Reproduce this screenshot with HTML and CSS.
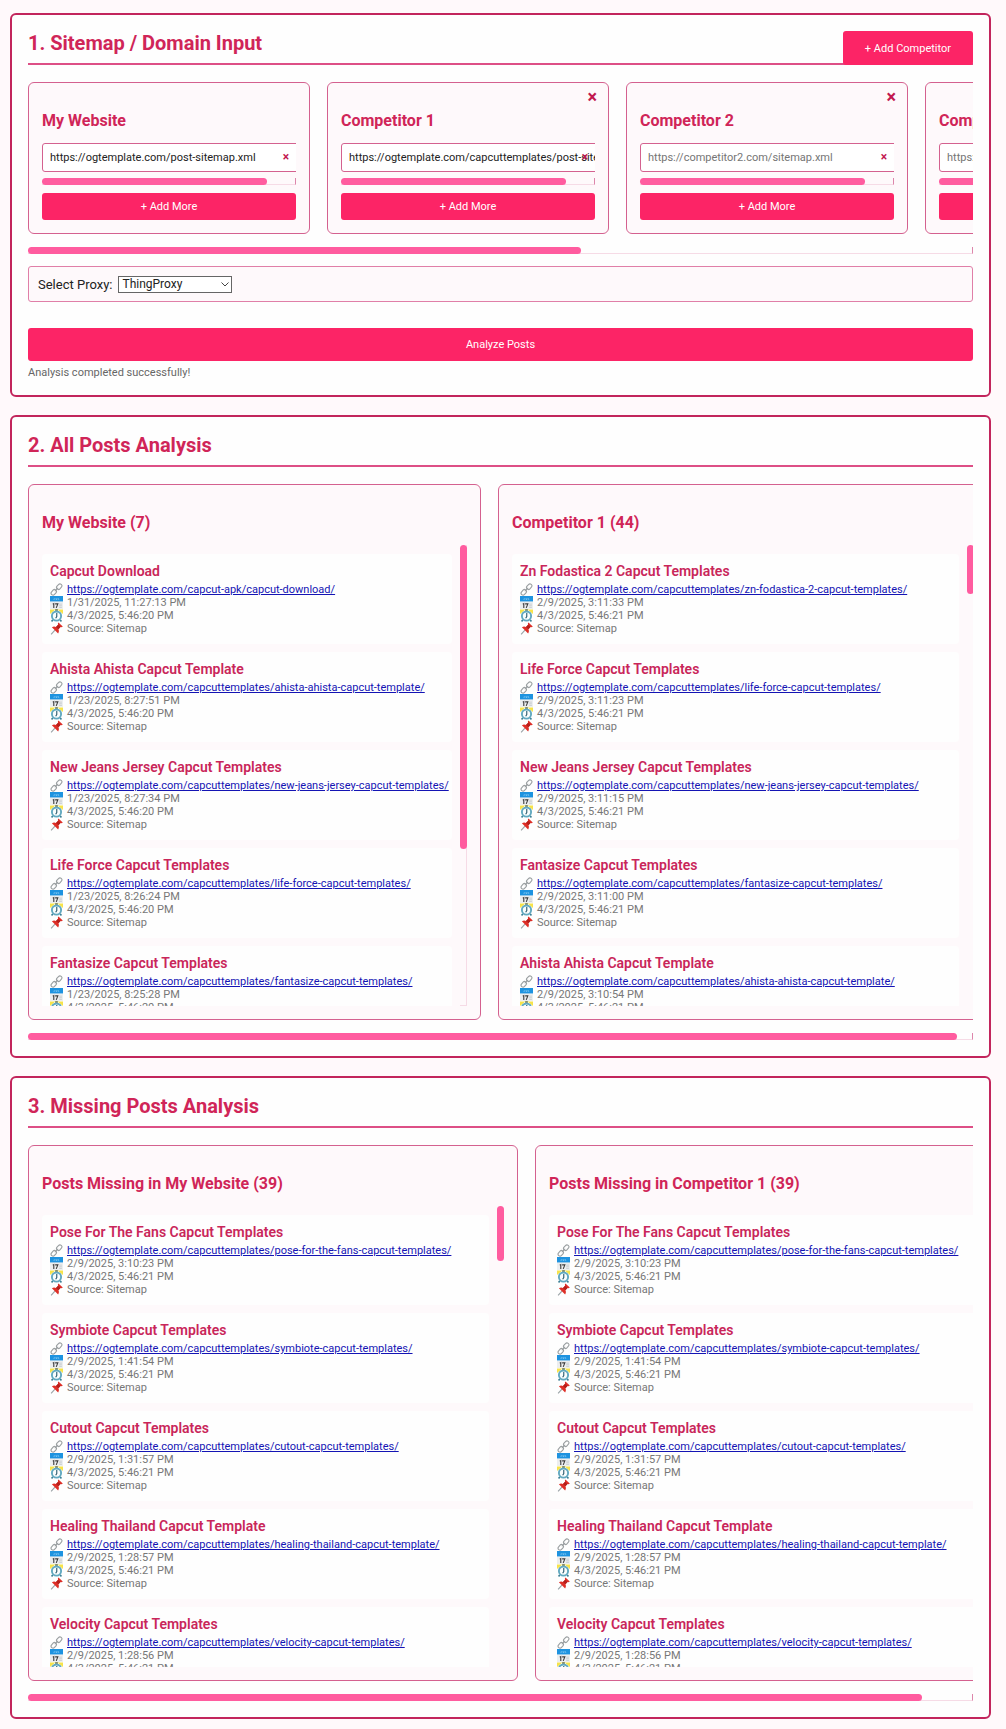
FILE: index.html
```html
<!DOCTYPE html>
<html lang="en">
<head>
<meta charset="utf-8">
<title>Sitemap Analysis</title>
<link rel="stylesheet" href="styles.css">
</head>
<body>
<svg class="sprite" aria-hidden="true">
  <symbol id="i-link" viewBox="0 0 24 24">
    <g fill="none" stroke="#9a9fa1" stroke-width="2">
      <rect x="-5.6" y="-3.6" width="11.2" height="7.2" rx="3.6" transform="translate(17 6.8) rotate(-48)"/>
      <rect x="-5.6" y="-3.6" width="11.2" height="7.2" rx="3.6" transform="translate(7 17.2) rotate(-48)"/>
      <path d="M9.500 14.500l5-5.200" stroke-linecap="round"/>
    </g>
  </symbol>
  <symbol id="i-cal" viewBox="0 0 24 24">
    <rect x="0" y="8" width="24" height="16" fill="#eceeef"/>
    <rect x="0" y="0" width="24" height="10" fill="#1e93e0"/>
    <path d="M8 4v2.400h-1.500M11 4v2.400h2V4M15.500 4v2.400h1.500" fill="none" stroke="#a6dbf7" stroke-width="1"/>
    <path d="M5 15l2-1V22M9.500 14.500h5l-3 7.500" fill="none" stroke="#3a3a3a" stroke-width="2"/>
    <path d="M17 15h5M17 18h5M17 21h5" stroke="#c3c8ca" stroke-width="1.500"/>
  </symbol>
  <symbol id="i-clock" viewBox="0 0 24 24">
    <path d="M0 9V1h10zM24 9V1h-10z" fill="#f6e34a"/>
    <path d="M5 20l-2 3M19 20l2 3" stroke="#3c7f94" stroke-width="3"/>
    <rect x="9.500" y="0" width="5" height="4" fill="#8a8f62"/>
    <circle cx="12" cy="13" r="8.500" fill="#fafdfd" stroke="#62a9c0" stroke-width="3.500"/>
    <path d="M12.500 7.500v6.500l-2 3" fill="none" stroke="#24566a" stroke-width="2"/>
  </symbol>
  <symbol id="i-pin" viewBox="0 0 24 24">
    <path d="M9.500 14.500L2 23" stroke="#9aa3a6" stroke-width="2"/>
    <path d="M3.500 9.500c3-2 5.500-1.500 7.500-.5l4-4c-.7-1.500-.4-3 .6-4.200l8 7.600c-1.200 1.200-2.600 1.500-4.200 1l-3.800 4.200c1.200 2.400 1.200 5-.6 7.400z" fill="#de2f27"/>
    <path d="M11 9l4-4 4.400 4.400-3.800 4.200z" fill="#b31f1b"/>
  </symbol>
</svg>
<main class="page">
  <section class="panel">
    <h2 class="panel-title">1. Sitemap / Domain Input</h2>
    <button class="btn add-competitor" type="button">+ Add Competitor</button>
    <div class="scroller">
      <div class="card site">
        <h3 class="card-title">My Website</h3>
        <div class="urls"><div class="url-row"><input class="url" type="text" aria-label="My Website sitemap" value="https://ogtemplate.com/post-sitemap.xml"><button class="clear" type="button" aria-label="Remove URL">×</button></div></div>
        <div class="hbar"><div class="thumb" style="width:89%"></div></div>
        <button class="btn add-more" type="button">+ Add More</button>
      </div>
      <div class="card site">
        <button class="close" type="button" aria-label="Remove Competitor 1">×</button>
        <h3 class="card-title">Competitor 1</h3>
        <div class="urls"><div class="url-row"><input class="url" type="text" aria-label="Competitor 1 sitemap" value="https://ogtemplate.com/capcuttemplates/post-sitemap.xml"><button class="clear" type="button" aria-label="Remove URL">×</button></div></div>
        <div class="hbar"><div class="thumb" style="width:89%"></div></div>
        <button class="btn add-more" type="button">+ Add More</button>
      </div>
      <div class="card site">
        <button class="close" type="button" aria-label="Remove Competitor 2">×</button>
        <h3 class="card-title">Competitor 2</h3>
        <div class="urls"><div class="url-row"><input class="url" type="text" aria-label="Competitor 2 sitemap" placeholder="https://competitor2.com/sitemap.xml"><button class="clear" type="button" aria-label="Remove URL">×</button></div></div>
        <div class="hbar"><div class="thumb" style="width:89%"></div></div>
        <button class="btn add-more" type="button">+ Add More</button>
      </div>
      <div class="card site">
        <button class="close" type="button" aria-label="Remove Competitor 3">×</button>
        <h3 class="card-title">Competitor 3</h3>
        <div class="urls"><div class="url-row"><input class="url" type="text" aria-label="Competitor 3 sitemap" placeholder="https://competitor3.com/sitemap.xml"><button class="clear" type="button" aria-label="Remove URL">×</button></div></div>
        <div class="hbar"><div class="thumb" style="width:89%"></div></div>
        <button class="btn add-more" type="button">+ Add More</button>
      </div>
    </div>
    <div class="hbar"><div class="thumb" style="width:58.6%"></div></div>
    <div class="proxy">
      <label for="proxy">Select Proxy:</label>
      <span class="select-wrap">
        <select id="proxy" class="select"><option>ThingProxy</option></select>
        <svg class="chevron" viewBox="0 0 8 5" aria-hidden="true"><path d="M.5.5L4 4 7.500.5" fill="none" stroke="#444"/></svg>
      </span>
    </div>
    <button class="btn analyze" type="button">Analyze Posts</button>
    <p class="status">Analysis completed successfully!</p>
  </section>

  <section class="panel">
    <h2 class="panel-title">2. All Posts Analysis</h2>
    <div class="scroller">
      <div class="card mine">
        <h3 class="card-title">My Website (7)</h3>
        <div class="list-wrap">
          <div class="list" id="mine"></div>
          <div class="vbar"><div class="thumb" style="height:66%"></div></div>
        </div>
      </div>
      <div class="card rival">
        <h3 class="card-title">Competitor 1 (44)</h3>
        <div class="list-wrap">
          <div class="list" id="rival"></div>
          <div class="vbar bare"><div class="thumb" style="height:10.6%"></div></div>
        </div>
      </div>
    </div>
    <div class="hbar"><div class="thumb" style="width:98.4%"></div></div>
  </section>

  <section class="panel">
    <h2 class="panel-title">3. Missing Posts Analysis</h2>
    <div class="scroller">
      <div class="card missing">
        <h3 class="card-title">Posts Missing in My Website (39)</h3>
        <div class="list-wrap">
          <div class="list" id="missing-mine"></div>
          <div class="vbar bare"><div class="thumb" style="height:12%"></div></div>
        </div>
      </div>
      <div class="card missing">
        <h3 class="card-title">Posts Missing in Competitor 1 (39)</h3>
        <div class="list-wrap">
          <div class="list" id="missing-rival"></div>
          <div class="vbar bare"><div class="thumb" style="height:12%"></div></div>
        </div>
      </div>
    </div>
    <div class="hbar"><div class="thumb" style="width:94.7%"></div></div>
  </section>
</main>
<script src="posts.js"></script>
</body>
</html>
```
FILE: styles.css
```css
* { box-sizing: border-box; }

body {
  margin: 0;
  background: #fff9fb;
  color: #222;
  font-family: Roboto, "Liberation Sans", sans-serif;
  font-size: 11px;
}

button, input, select { font: inherit; }
h2, h3, h4, p { margin: 0; }
.sprite { display: none; }

.page {
  display: flex;
  flex-direction: column;
  gap: 18px;
  padding: 13px 15px 10px 10px;
}

.panel {
  position: relative;
  min-width: 0;
  padding: 16px;
  border: 2px solid #c2255c;
  border-radius: 6px;
  background: #fefefe;
}

.panel-title {
  margin-bottom: 17px;
  padding-bottom: 8px;
  border-bottom: 2px solid #dd4f86;
  color: #d02558;
  font-size: 20px;
  font-weight: 700;
  line-height: 24px;
}

.btn {
  display: block;
  padding: 0;
  border: 0;
  border-radius: 3px;
  background: #fc2466;
  color: #fff;
  text-align: center;
}

.add-competitor {
  position: absolute;
  top: 16px;
  right: 16px;
  height: 34px;
  padding: 0 22px;
}

.scroller {
  display: flex;
  gap: 17px;
  margin-bottom: 13px;
  overflow-x: auto;
  scrollbar-width: none;
}

.card {
  position: relative;
  flex: none;
  padding: 13px;
  border: 1px solid #d4618f;
  border-radius: 6px;
  background: #fef9fb;
}
.site { width: 282px; }
.mine { width: 453px; }
.rival { width: 490px; }
.missing { width: 490px; }

.card-title {
  margin: 15px 0 12px;
  color: #d02558;
  font-size: 16px;
  font-weight: 700;
  line-height: 20px;
}

.close, .clear {
  position: absolute;
  padding: 0;
  border: 0;
  background: none;
  color: #c2184f;
  font-weight: 700;
}
.close { top: 5px; right: 11px; font-size: 18px; line-height: 18px; }
.clear { top: 7px; right: 39px; font-size: 12px; line-height: 14px; }

.urls { overflow-x: auto; scrollbar-width: none; }
.url-row { position: relative; width: 286px; }
.url {
  display: block;
  width: 100%;
  height: 29px;
  padding: 0 7px;
  border: 1px solid #d4618f;
  border-radius: 3px;
  background: #fff;
  color: #222;
}
.url::placeholder { color: #757575; opacity: 1; }

.hbar {
  height: 7px;
  border-right: 1px solid #dd86ab;
  border-bottom: 1px solid #f6dbe6;
}
.hbar .thumb { height: 7px; }
.thumb { border-radius: 4px; background: #ff5c9f; }

.urls + .hbar { margin: 6px 0 8px; }
.add-more { width: 100%; height: 27px; }

.proxy {
  display: flex;
  align-items: center;
  gap: 6px;
  height: 36px;
  margin: 12px 0 26px;
  padding: 0 9px;
  border: 1px solid #e07fa8;
  border-radius: 3px;
  background: #fef9fb;
  font-size: 13px;
}
.select-wrap { position: relative; display: flex; }
.select {
  width: 114px;
  height: 17px;
  padding: 0 3px;
  border: 1px solid #666;
  border-radius: 0;
  appearance: none;
  background: #fff;
  color: #222;
  font-size: 12px;
  line-height: 15px;
}
.chevron { position: absolute; top: 6px; right: 3px; width: 8px; height: 5px; pointer-events: none; }

.analyze { width: 100%; height: 33px; }
.status { margin-top: 5px; color: #666; line-height: 13px; }

.list-wrap { display: flex; gap: 8px; }
.list {
  display: flex;
  flex: 1;
  flex-direction: column;
  gap: 8px;
  min-width: 0;
  height: 461px;
  padding-top: 9px;
  overflow-y: auto;
  scrollbar-width: none;
}
.vbar {
  flex: none;
  width: 7px;
  border-right: 1px solid #f6dbe6;
  border-bottom: 1px solid #f6dbe6;
}
.vbar.bare { border-color: transparent; }
.vbar .thumb { width: 7px; }

.post {
  flex: none;
  padding: 8px 8px 9px;
  border-radius: 4px;
  background: #fefefe;
  white-space: nowrap;
}
.post-title {
  margin-bottom: 3px;
  color: #c9265a;
  font-size: 14px;
  font-weight: 600;
  line-height: 18px;
}
.meta {
  display: flex;
  align-items: center;
  gap: 4px;
  color: #777;
  line-height: 13px;
}
.meta svg { flex: none; width: 13px; height: 13px; }
.meta a { color: #1414b4; }
```
FILE: posts.js
```js
const base = "https://ogtemplate.com/capcuttemplates/";
const missing = [
  ["Pose For The Fans Capcut Templates", base + "pose-for-the-fans-capcut-templates/", "2/9/2025, 3:10:23 PM"],
  ["Symbiote Capcut Templates", base + "symbiote-capcut-templates/", "2/9/2025, 1:41:54 PM"],
  ["Cutout Capcut Templates", base + "cutout-capcut-templates/", "2/9/2025, 1:31:57 PM"],
  ["Healing Thailand Capcut Template", base + "healing-thailand-capcut-template/", "2/9/2025, 1:28:57 PM"],
  ["Velocity Capcut Templates", base + "velocity-capcut-templates/", "2/9/2025, 1:28:56 PM"]
];
const lists = {
  "mine": { checked: "4/3/2025, 5:46:20 PM", posts: [
    ["Capcut Download", "https://ogtemplate.com/capcut-apk/capcut-download/", "1/31/2025, 11:27:13 PM"],
    ["Ahista Ahista Capcut Template", base + "ahista-ahista-capcut-template/", "1/23/2025, 8:27:51 PM"],
    ["New Jeans Jersey Capcut Templates", base + "new-jeans-jersey-capcut-templates/", "1/23/2025, 8:27:34 PM"],
    ["Life Force Capcut Templates", base + "life-force-capcut-templates/", "1/23/2025, 8:26:24 PM"],
    ["Fantasize Capcut Templates", base + "fantasize-capcut-templates/", "1/23/2025, 8:25:28 PM"]
  ] },
  "rival": { checked: "4/3/2025, 5:46:21 PM", posts: [
    ["Zn Fodastica 2 Capcut Templates", base + "zn-fodastica-2-capcut-templates/", "2/9/2025, 3:11:33 PM"],
    ["Life Force Capcut Templates", base + "life-force-capcut-templates/", "2/9/2025, 3:11:23 PM"],
    ["New Jeans Jersey Capcut Templates", base + "new-jeans-jersey-capcut-templates/", "2/9/2025, 3:11:15 PM"],
    ["Fantasize Capcut Templates", base + "fantasize-capcut-templates/", "2/9/2025, 3:11:00 PM"],
    ["Ahista Ahista Capcut Template", base + "ahista-ahista-capcut-template/", "2/9/2025, 3:10:54 PM"]
  ] },
  "missing-mine": { checked: "4/3/2025, 5:46:21 PM", posts: missing },
  "missing-rival": { checked: "4/3/2025, 5:46:21 PM", posts: missing }
};

const row = (icon, content) =>
  `<div class="meta"><svg aria-hidden="true"><use href="#i-${icon}"/></svg>${content}</div>`;

for (const [id, { checked, posts }] of Object.entries(lists)) {
  document.getElementById(id).innerHTML = posts.map(([title, url, date]) => `
    <article class="post">
      <h4 class="post-title">${title}</h4>
      ${row("link", `<a href="${url}">${url}</a>`)}
      ${row("cal", `<span>${date}</span>`)}
      ${row("clock", `<span>${checked}</span>`)}
      ${row("pin", "<span>Source: Sitemap</span>")}
    </article>`).join("");
}
```
